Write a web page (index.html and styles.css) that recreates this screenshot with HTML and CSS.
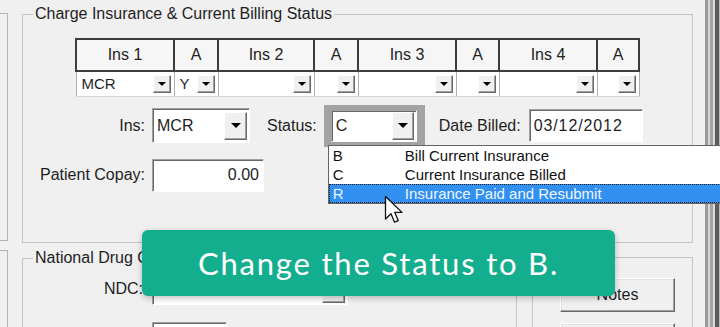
FILE: index.html
```html
<!DOCTYPE html>
<html lang="en">
<head>
    <meta charset="UTF-8">
    <title>Charge Insurance &amp; Current Billing Status</title>

    <link rel="stylesheet" href="styles.css">
</head>
<body>
    <div class="screen">
        <div class="side-left">
            <div class="side-box side-top"></div>
            <div class="side-box side-bottom"></div>
        </div>

        <div class="main">
            <fieldset class="group group-charge">
                <legend>Charge Insurance &amp; Current Billing Status</legend>

                <table class="ins-grid">
                    <tr>
                        <th class="w-ins1">Ins 1</th>
                        <th class="w-a">A</th>
                        <th class="w-ins2">Ins 2</th>
                        <th class="w-a">A</th>
                        <th class="w-ins1">Ins 3</th>
                        <th class="w-a3">A</th>
                        <th class="w-ins1">Ins 4</th>
                        <th class="w-a4">A</th>
                    </tr>
                    <tr>
                        <td><div class="cell-combo"><span>MCR</span><span class="drop"></span></div></td>
                        <td><div class="cell-combo"><span>Y</span><span class="drop"></span></div></td>
                        <td><div class="cell-combo"><span></span><span class="drop"></span></div></td>
                        <td><div class="cell-combo"><span></span><span class="drop"></span></div></td>
                        <td><div class="cell-combo"><span></span><span class="drop"></span></div></td>
                        <td><div class="cell-combo"><span></span><span class="drop"></span></div></td>
                        <td><div class="cell-combo"><span></span><span class="drop"></span></div></td>
                        <td><div class="cell-combo"><span></span><span class="drop"></span></div></td>
                    </tr>
                </table>

                <div class="form-row row-ins">
                    <label class="lbl lbl-first">Ins:</label>
                    <div class="combo combo-ins"><span>MCR</span><span class="drop drop-big"></span></div>
                    <label class="lbl lbl-status">Status:</label>
                    <div class="focus-ring">
                        <div class="combo combo-status"><span>C</span><span class="drop drop-big"></span></div>
                        <ul class="status-list">
                            <li><span class="code">B</span>Bill Current Insurance</li>
                            <li><span class="code">C</span>Current Insurance Billed</li>
                            <li class="selected"><span class="code">R</span>Insurance Paid and Resubmit</li>
                        </ul>
                    </div>
                    <label class="lbl lbl-date">Date Billed:</label>
                    <div class="field field-date">03/12/2012</div>
                </div>

                <div class="form-row row-copay">
                    <label class="lbl lbl-first">Patient Copay:</label>
                    <div class="field field-copay">0.00</div>
                </div>
            </fieldset>

            <div class="bottom-row">
                <fieldset class="group group-ndc">
                    <legend>National Drug Code</legend>
                    <div class="form-row row-ndc">
                        <label class="lbl lbl-ndc">NDC:</label>
                        <div class="combo combo-ndc"><span></span><span class="drop drop-big"></span></div>
                    </div>
                    <div class="field field-small"></div>
                </fieldset>

                <fieldset class="group group-notes">
                    <div class="win-btn">Notes</div>
                    <div class="win-btn"></div>
                </fieldset>
            </div>
        </div>

        <div class="frame-right"></div>

        <svg class="cursor" width="20" height="30" viewBox="0 0 20 30">
            <path d="M1.5 1.5 L1.5 24 L7 18.8 L10.6 27.2 L14.2 25.6 L10.8 17.4 L18 17.4 Z" fill="#fff" stroke="#111" stroke-width="1.3" stroke-linejoin="round"/>
        </svg>

        <div class="tip">Change the Status to B.</div>
    </div>
</body>
</html>
```

FILE: styles.css
```css
* {
    margin: 0;
    padding: 0;
    box-sizing: border-box;
}

body {
    background: #f0f0f0;
    font-family: "Liberation Sans", Arial, sans-serif;
    font-size: 16px;
    color: #1e1e1e;
    overflow: hidden;
}

.screen {
    position: relative;
    display: flex;
    width: 720px;
    height: 327px;
    overflow: hidden;
}

/* left neighbour panels */
.side-left {
    width: 8px;
    flex: none;
    display: flex;
    flex-direction: column;
}

.side-box {
    border: 1px solid #b4b4b4;
    border-left: none;
}

.side-top {
    margin-top: 13px;
    height: 228px;
}

.side-bottom {
    margin-top: 9px;
    flex: 1;
    border-bottom: none;
}

.main {
    width: 697px;
    flex: none;
    padding: 5px 12px 0 14px;
}

.frame-right {
    width: 15px;
    flex: none;
    background: linear-gradient(to right,
        #9b9b9b 0, #9b9b9b 3px,
        #d6d6d6 3px, #d6d6d6 5px,
        #a3a3a3 5px, #a3a3a3 8px,
        #dadada 8px, #dadada 10px,
        #5a5a5a 10px, #5a5a5a 14px,
        #bdbdbd 14px);
}

/* group boxes */
.group {
    border: 1px solid #c4c4c4;
    min-width: 0;
}

.group legend {
    margin-left: 10px;
    padding: 0 2px;
    line-height: 18px;
}

.group-charge {
    height: 238px;
}

/* insurance grid */
.ins-grid {
    margin: 15px 0 0 52px;
    border-collapse: collapse;
    table-layout: fixed;
    width: 563px;
}

.ins-grid th {
    height: 32px;
    border: 2px solid #3c3c3c;
    background: #f6f6f6;
    font-weight: normal;
    font-size: 16px;
    color: #222;
}

.w-ins1 { width: 98px; }
.w-ins2 { width: 96px; }
.w-a { width: 44px; }
.w-a3 { width: 43px; }
.w-a4 { width: 42px; }

.ins-grid td {
    height: 25px;
    padding: 0;
    background: #fff;
    border: 1px solid #b0b0b0;
    border-bottom-color: #d6d6d6;
}

.cell-combo {
    display: flex;
    align-items: center;
    justify-content: space-between;
    height: 23px;
    padding: 0 3px 0 5px;
    font-size: 15px;
}

.drop {
    display: flex;
    align-items: center;
    justify-content: center;
    flex: none;
    width: 18px;
    height: 18px;
    background: #f0f0f0;
    border: 1px solid;
    border-color: #fff #696969 #696969 #fff;
    box-shadow: inset -1px -1px 0 #a0a0a0;
}

.drop::after {
    content: "";
    border-left: 4px solid transparent;
    border-right: 4px solid transparent;
    border-top: 4px solid #000;
}

.drop-big {
    width: 23px;
    height: 28px;
}

.drop-big::after {
    border-left-width: 5px;
    border-right-width: 5px;
    border-top-width: 5px;
}

/* form rows */
.form-row {
    display: flex;
    align-items: center;
}

.row-ins {
    margin-top: 8px;
    height: 42px;
}

.row-copay {
    margin-top: 12px;
}

.lbl-first {
    width: 122px;
    margin-right: 7px;
    text-align: right;
}

.lbl-status {
    margin-left: 17px;
    margin-right: 7px;
}

.lbl-date {
    margin-left: 14px;
    margin-right: 8px;
}

.combo, .field {
    display: flex;
    align-items: center;
    background: #fff;
    border: 1px solid;
    border-color: #a0a0a0 #fff #fff #a0a0a0;
    box-shadow: inset 1px 1px 0 #696969;
    padding-left: 4px;
}

.combo {
    justify-content: space-between;
    padding-right: 2px;
}

.combo-ins {
    width: 98px;
    height: 35px;
}

.focus-ring {
    position: relative;
    padding: 5px 8px 5px 7px;
    background: #a3a3a3;
}

.combo-status {
    width: 86px;
    height: 32px;
}

.combo-status .drop-big {
    width: 22px;
}

.field-date {
    width: 114px;
    height: 33px;
    letter-spacing: 0.9px;
}

.field-copay {
    width: 112px;
    height: 33px;
    justify-content: flex-end;
    padding-right: 4px;
}

/* dropdown list */
.status-list {
    position: absolute;
    left: 4px;
    top: 40px;
    z-index: 5;
    width: 420px;
    list-style: none;
    background: #fff;
    border: 1px solid #646464;
}

.status-list li {
    display: flex;
    height: 19px;
    line-height: 19px;
    padding-left: 4px;
    font-size: 15px;
    color: #111;
}

.status-list .code {
    width: 72px;
}

.status-list .selected {
    background: #3290f0;
    color: #eef6ff;
    outline: 1px dotted #1a1a1a;
    outline-offset: -1px;
}

/* bottom groups */
.bottom-row {
    display: flex;
    align-items: flex-start;
    margin-top: 6px;
}

.group-ndc {
    width: 495px;
    height: 100px;
}

.row-ndc {
    margin-top: 5px;
}

.lbl-ndc {
    width: 120px;
    margin-right: 9px;
    text-align: right;
}

.combo-ndc {
    width: 196px;
    height: 33px;
}

.field-small {
    width: 75px;
    height: 30px;
    margin: 17px 0 0 129px;
}

.group-notes {
    width: 161px;
    height: 90px;
    margin: 8px 0 0 15px;
}

.win-btn {
    display: flex;
    align-items: center;
    justify-content: center;
    width: 115px;
    height: 34px;
    margin: 20px 0 0 27px;
    background: #f0f0f0;
    border: 1px solid;
    border-color: #fff #696969 #696969 #fff;
    box-shadow: inset -1px -1px 0 #a0a0a0, inset 1px 1px 0 #e3e3e3;
}

.win-btn + .win-btn {
    margin-top: 11px;
}

/* overlays */
.cursor {
    position: absolute;
    left: 384px;
    top: 195px;
    z-index: 6;
}

.tip {
    position: absolute;
    left: 142px;
    top: 230px;
    z-index: 7;
    display: flex;
    align-items: center;
    justify-content: center;
    width: 473px;
    height: 66px;
    background: #13ae8d;
    border-radius: 6px;
    box-shadow: 0 2px 6px rgba(0, 0, 0, 0.25);
    font-family: Lato, "Open Sans", sans-serif;
    font-size: 31px;
    letter-spacing: 1.8px;
    color: #fff;
}
```
